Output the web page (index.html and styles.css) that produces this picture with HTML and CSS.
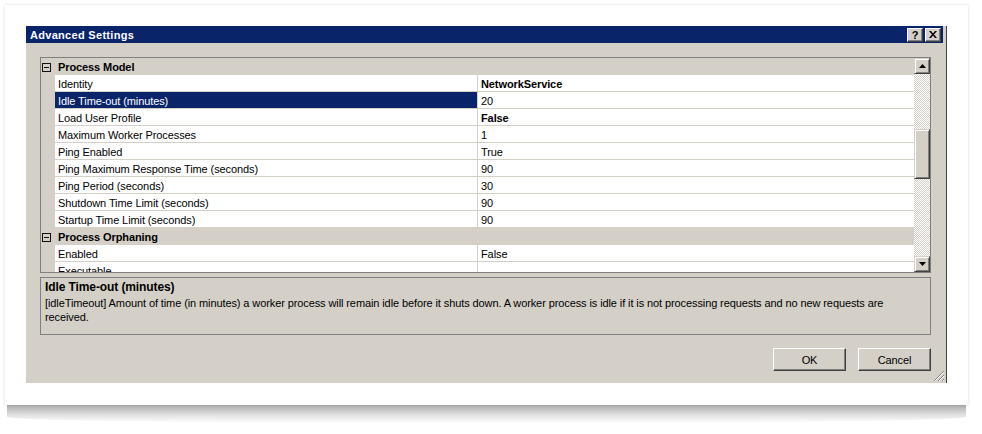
FILE: index.html
```html
<!DOCTYPE html>
<html>
<head>
<meta charset="utf-8">
<title>Advanced Settings</title>
<link rel="stylesheet" href="styles.css">
</head>
<body>
<div class="page">
  <div class="card">
    <div class="dialog">
      <div class="titlebar">
        <span class="title">Advanced Settings</span>
        <div class="capbtns">
          <span class="capbtn help">?</span>
          <span class="capbtn"><svg width="8" height="7" viewBox="0 0 8 7"><path d="M0 0h2l2 2.5L6 0h2L5 3.5 8 7H6L4 4.5 2 7H0l3-3.5z" fill="#000"/></svg></span>
        </div>
      </div>
      <div class="body">
        <div class="grid">
          <div class="rows">
            <div class="cat"><span class="exp"><svg width="9" height="9" viewBox="0 0 9 9"><rect x="0.5" y="0.5" width="8" height="8" fill="none" stroke="#111"/><path d="M2 4.5h5" stroke="#111"/></svg></span><span class="cat-label">Process Model</span></div>
            <div class="row"><div class="name">Identity</div><div class="val strong">NetworkService</div></div>
            <div class="row selected"><div class="name">Idle Time-out (minutes)</div><div class="val">20</div></div>
            <div class="row"><div class="name">Load User Profile</div><div class="val strong">False</div></div>
            <div class="row"><div class="name">Maximum Worker Processes</div><div class="val">1</div></div>
            <div class="row"><div class="name">Ping Enabled</div><div class="val">True</div></div>
            <div class="row"><div class="name">Ping Maximum Response Time (seconds)</div><div class="val">90</div></div>
            <div class="row"><div class="name">Ping Period (seconds)</div><div class="val">30</div></div>
            <div class="row"><div class="name">Shutdown Time Limit (seconds)</div><div class="val">90</div></div>
            <div class="row"><div class="name">Startup Time Limit (seconds)</div><div class="val">90</div></div>
            <div class="cat"><span class="exp"><svg width="9" height="9" viewBox="0 0 9 9"><rect x="0.5" y="0.5" width="8" height="8" fill="none" stroke="#111"/><path d="M2 4.5h5" stroke="#111"/></svg></span><span class="cat-label">Process Orphaning</span></div>
            <div class="row"><div class="name">Enabled</div><div class="val">False</div></div>
            <div class="row"><div class="name">Executable</div><div class="val"></div></div>
          </div>
          <div class="vscroll">
            <span class="sbtn"><svg width="7" height="4" viewBox="0 0 7 4"><path d="M3.5 0L7 4H0z" fill="#000"/></svg></span>
            <span class="track track-top"></span>
            <span class="thumb"></span>
            <span class="track track-bottom"></span>
            <span class="sbtn"><svg width="7" height="4" viewBox="0 0 7 4"><path d="M0 0h7L3.5 4z" fill="#000"/></svg></span>
          </div>
        </div>
        <div class="desc">
          <div class="desc-title">Idle Time-out (minutes)</div>
          <div class="desc-text">[idleTimeout] Amount of time (in minutes) a worker process will remain idle before it shuts down. A worker process is idle if it is not processing requests and no new requests are<br>received.</div>
        </div>
        <div class="actions">
          <span class="btn">OK</span>
          <span class="btn">Cancel</span>
        </div>
      </div>
      <svg class="grip" width="12" height="12" viewBox="0 0 12 12">
        <path d="M11 1L1 11M11 5L5 11M11 9L9 11" stroke="#808080" stroke-width="1"/>
        <path d="M11 2L2 11M11 6L6 11M11 10L10 11" stroke="#fff" stroke-width="1"/>
      </svg>
    </div>
  </div>
</div>
</body>
</html>
```
FILE: styles.css
```css
* { box-sizing: border-box; }
html, body { margin: 0; padding: 0; background: #fff; }
body {
  font-family: "Liberation Sans", Arial, sans-serif;
  font-size: 11px;
  letter-spacing: -0.1px;
  color: #000;
}
.page {
  padding: 5px 14px 29px 5px;
}
.card {
  position: relative;
  width: 963px;
  height: 400px;
  background: #fff;
  padding: 21px 0 0 21px;
  box-shadow: 0 0 3px rgba(0,0,0,0.16);
}
.card::after {
  content: "";
  position: absolute;
  left: 2px;
  right: 2px;
  top: 100%;
  height: 18px;
  background: linear-gradient(to bottom, rgba(0,0,0,0.32), rgba(0,0,0,0.12) 55%, rgba(0,0,0,0));
  border-radius: 0 0 40% 40% / 0 0 35% 35%;
}
.dialog {
  position: relative;
  width: 921px;
  height: 357px;
  background: #d4d0c8;
  border-right: 1px solid #404040;
  display: flex;
  flex-direction: column;
}
.titlebar {
  height: 17px;
  margin-right: 3px;
  background: #0a246a;
  display: flex;
  align-items: center;
  justify-content: space-between;
  padding: 0 2px 0 4px;
}
.title {
  color: #fff;
  font-weight: bold;
  font-size: 11px;
  letter-spacing: 0.3px;
}
.capbtns { display: flex; gap: 2px; }
.capbtn {
  width: 16px;
  height: 14px;
  background: #d4d0c8;
  border: 1px solid;
  border-color: #fff #404040 #404040 #fff;
  box-shadow: inset -1px -1px #808080;
  display: flex;
  align-items: center;
  justify-content: center;
}
.capbtn.help {
  font-weight: bold;
  font-size: 11px;
  line-height: 12px;
}
.body {
  padding: 14px 15px 0 14px;
  display: flex;
  flex-direction: column;
}
.grid {
  display: flex;
  height: 216px;
  border: 1px solid #808080;
  background: #fff;
}
.rows {
  width: 873px;
  overflow: hidden;
}
.cat {
  height: 17px;
  background: #d4d0c8;
  display: flex;
  align-items: center;
  font-weight: bold;
  padding-top: 1px;
}
.exp {
  width: 17px;
  padding-left: 1px;
  display: flex;
  align-items: center;
}
.exp svg { display: block; }
.row {
  height: 17px;
  display: flex;
  padding-left: 14px;
  background: #d4d0c8;
}
.name {
  width: 423px;
  background: #fff;
  border-right: 1px solid #d4d0c8;
  border-bottom: 1px solid #d4d0c8;
  padding: 2px 0 0 3px;
  line-height: 14px;
  white-space: nowrap;
}
.val {
  flex: 1;
  background: #fff;
  border-bottom: 1px solid #d4d0c8;
  padding: 2px 0 0 3px;
  line-height: 14px;
}
.strong { font-weight: bold; }
.selected .name {
  background: #0a246a;
  color: #fff;
}
.vscroll {
  width: 16px;
  display: flex;
  flex-direction: column;
}
.sbtn, .thumb {
  background: #d4d0c8;
  border: 1px solid;
  border-color: #d4d0c8 #404040 #404040 #d4d0c8;
  box-shadow: inset 1px 1px #fff, inset -1px -1px #808080;
}
.sbtn {
  height: 16px;
  display: flex;
  align-items: center;
  justify-content: center;
}
.sbtn svg { display: block; }
.thumb { height: 50px; }
.track {
  background: repeating-conic-gradient(#fff 0 25%, #d4d0c8 0 50%) 0 0 / 2px 2px;
}
.track-top { height: 55px; }
.track-bottom { height: 77px; }
.desc {
  margin-top: 4px;
  height: 58px;
  border: 1px solid #808080;
  padding: 2px 4px 0 4px;
}
.desc-title {
  font-weight: bold;
  font-size: 12px;
  line-height: 14px;
}
.desc-text {
  margin-top: 2px;
  line-height: 14px;
}
.actions {
  margin-top: 13px;
  display: flex;
  justify-content: flex-end;
  gap: 12px;
}
.btn {
  width: 73px;
  height: 23px;
  background: #d4d0c8;
  border: 1px solid;
  border-color: #fff #404040 #404040 #fff;
  box-shadow: inset -1px -1px #808080;
  display: flex;
  align-items: center;
  justify-content: center;
}
.grip {
  position: absolute;
  right: 1px;
  bottom: 1px;
}
```
